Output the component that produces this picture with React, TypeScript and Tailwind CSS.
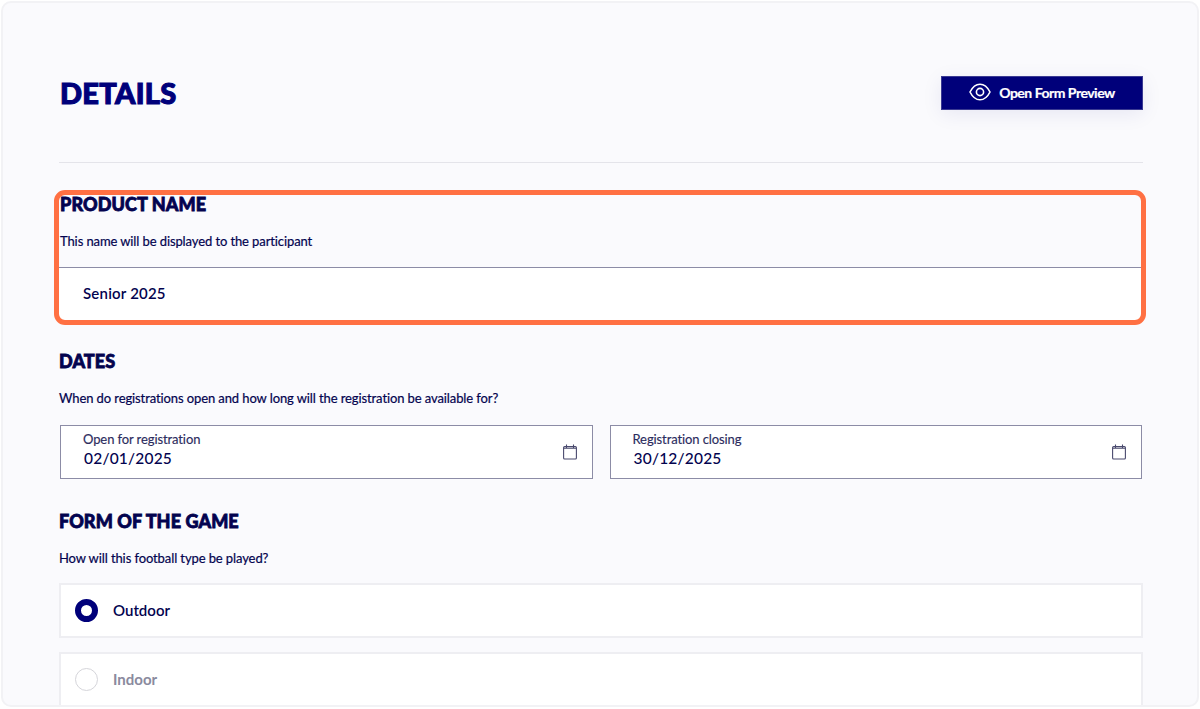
const font = "font-['Lato','Noto_Sans',sans-serif]";

function SectionTitle({ title, hint }: { title: string; hint: string }) {
  return (
    <div>
      <h2 className="text-[18px] leading-[22px] font-black tracking-[0.1px] text-[#03034f] [-webkit-text-stroke:0.8px_#03034f]">{title}</h2>
      <p className="mt-[17px] text-[13px] leading-[18px] tracking-[-0.1px] text-[#03034f] [-webkit-text-stroke:0.2px_#03034f]">{hint}</p>
    </div>
  );
}

function EyeIcon() {
  return (
    <svg width="22" height="18" viewBox="0 0 22 18" fill="none" stroke="currentColor" strokeWidth="1.6" className="shrink-0">
      <path d="M1 9C3.5 4 7 1.2 11 1.2S18.5 4 21 9c-2.5 5-6 7.8-10 7.8S3.5 14 1 9Z" />
      <circle cx="11" cy="9" r="3.6" />
    </svg>
  );
}

function CalendarIcon() {
  return (
    <svg width="14" height="16" viewBox="0 0 14 16" fill="none" stroke="#4a4a6e" strokeWidth="1.1" className="shrink-0">
      <rect x="0.6" y="2.6" width="12.8" height="12.4" rx="1" />
      <path d="M3.5 0.5v3.6M10.5 0.5v3.6M0.6 4.2h12.8" />
    </svg>
  );
}

function DateField({ label, value }: { label: string; value: string }) {
  return (
    <div className="flex h-[54px] flex-1 items-center justify-between border border-[#8c8ca6] bg-white pr-[15px] pl-[22px]">
      <div className="self-start pt-[5px]">
        <div className="text-[13px] leading-[16px] tracking-[-0.1px] text-[#2c2c5e] [-webkit-text-stroke:0.15px_#2c2c5e]">{label}</div>
        <div className="mt-[2px] pl-px text-[15.5px] leading-[18px] font-medium tracking-[0.2px] text-[#03034f]">{value}</div>
      </div>
      <CalendarIcon />
    </div>
  );
}

function RadioRow({ label, selected }: { label: string; selected?: boolean }) {
  return (
    <div className="flex h-[55px] items-center gap-[15px] border-2 border-[#eeeef2] bg-white pl-[14px]">
      {selected ? (
        <span className="size-[23px] rounded-full border-[6px] border-[#00007a] bg-white" />
      ) : (
        <span className="size-[23px] rounded-full border border-[#d5d5da] bg-white" />
      )}
      <span className={selected ? "text-[15px] font-semibold text-[#03034f]" : "text-[15px] font-bold text-[#8a8a9e]"}>{label}</span>
    </div>
  );
}

export default function App() {
  return (
    <div className={`${font} h-[709px] overflow-hidden bg-white p-px`}>
      <div className="h-[706px] overflow-hidden rounded-[10px] border-2 border-[#f2f2f5] bg-[#fafafd] pt-[73px] pr-[54px] pl-[56px]">
        <div className="flex items-start justify-between border-b border-[#e4e4ea] pb-[52px]">
          <h1 className="mt-[1px] pl-px text-[29px] leading-[32px] font-black tracking-[0.3px] text-[#00007a] [-webkit-text-stroke:1.1px_#00007a]">DETAILS</h1>
          <button className="flex h-[34px] w-[202px] items-center justify-center gap-[8px] border border-[#3a3a92] bg-[#00007a] pb-[2px] text-[14px] font-bold tracking-[-0.5px] text-white shadow-[0_4px_20px_rgba(0,0,122,0.08)] [-webkit-text-stroke:0.2px_#ffffff]">
            <EyeIcon />
            Open Form Preview
          </button>
        </div>

        <section className="relative mt-[30px]">
          <div className="pointer-events-none absolute -top-[3px] -right-[3px] -left-[5px] z-10 h-[135px] rounded-[11px] border-[5px] border-[#ff7043]" />
          <div className="pl-px">
            <SectionTitle title="PRODUCT NAME" hint="This name will be displayed to the participant" />
          </div>
          <div className="mt-[17px] flex h-[53px] items-center border-t border-[#8c8ca6] bg-white pb-[1px] pl-[24px] text-[15px] font-semibold tracking-[0.2px] text-[#03034f]">
            Senior 2025
          </div>
        </section>

        <section className="mt-[30px]">
          <SectionTitle title="DATES" hint="When do registrations open and how long will the registration be available for?" />
          <div className="mt-[18px] flex gap-[17px] px-px">
            <DateField label="Open for registration" value="02/01/2025" />
            <DateField label="Registration closing" value="30/12/2025" />
          </div>
        </section>

        <section className="mt-[31px]">
          <SectionTitle title="FORM OF THE GAME" hint="How will this football type be played?" />
          <div className="mt-[16px] flex flex-col gap-[14px]">
            <RadioRow label="Outdoor" selected />
            <RadioRow label="Indoor" />
          </div>
        </section>
      </div>
    </div>
  );
}
